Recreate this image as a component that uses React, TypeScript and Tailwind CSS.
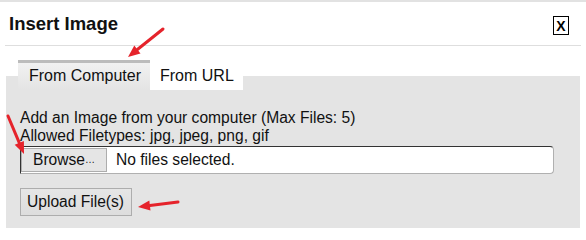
import React from 'react'

const font = { fontFamily: '"Liberation Sans", Arial, sans-serif' }

function Arrows() {
  // red annotation arrows drawn over the dialog
  return (
    <svg className="absolute inset-0 pointer-events-none" width="586" height="228" viewBox="0 0 586 228">
      <g stroke="#e5232b" strokeWidth="3" strokeLinecap="round" fill="#e5232b">
        <line x1="163" y1="27" x2="137.4" y2="47.5" />
        <polygon points="128,55 140.5,51.4 134.3,43.6" stroke="none" />
        <line x1="8" y1="114" x2="19.3" y2="140.9" />
        <polygon points="24,152 23.9,139 14.7,142.8" stroke="none" />
        <line x1="178" y1="200" x2="149.9" y2="203.5" />
        <polygon points="138,205 150.5,208.5 149.3,198.5" stroke="none" />
      </g>
    </svg>
  )
}

export default function App() {
  return (
    <div className="relative w-[586px] h-[228px] overflow-hidden bg-white border-t-2 border-[#e2e2e2] flex flex-col" style={font}>
      {/* Header */}
      <div className="mx-[5px] h-[44px] shrink-0 border-b border-[#dedede] flex items-start justify-between">
        <h1 className="mt-[10.5px] ml-[4px] text-[18.5px] leading-[22px] font-bold text-[#111]">Insert Image</h1>
        <button className="mt-[14px] mr-[12px] w-[16px] h-[19px] border border-black flex items-center justify-center text-[14px] font-bold leading-none text-black">
          X
        </button>
      </div>

      {/* Tabs */}
      <div className="relative z-10 flex items-start mt-[14px] ml-[18px] h-[30px] shrink-0">
        <div className="w-[132px] h-[30px] border-t-[3px] border-[#bcbcbc] bg-gradient-to-b from-[#f1f1f1] to-[#e4e4e4] pl-[11px] pt-[3.5px] text-[16px] leading-[18px] text-[#111]">
          From Computer
        </div>
        <div className="mt-[3px] w-[93px] h-[27px] bg-white pl-[10px] pt-[3.5px] text-[16px] leading-[18px] text-[#111]">
          From URL
        </div>
      </div>

      {/* Panel */}
      <div className="flex-1 -mt-[14px] mx-[6px] bg-[#e4e4e4] pl-[14px] pr-[26px] pt-[33px] text-[15.6px] leading-[18px] text-[#111]">
        <p>Add an Image from your computer (Max Files: 5)</p>
        <p>Allowed Filetypes: jpg, jpeg, png, gif</p>

        <div className="mt-[1px] h-[28px] flex items-center bg-white border border-t-[#333] border-l-[#333] border-r-[#b0b0b0] border-b-[#b0b0b0] rounded-r-[4px]">
          <span className="w-[86px] h-[24px] flex items-center justify-center bg-[#e5e5e5] border border-[#adadad]">
            Browse<span className="text-[10px]">…</span>
          </span>
          <span className="ml-[9px]">No files selected.</span>
        </div>

        <button className="mt-[14px] w-[112px] h-[28px] flex items-center pl-[6px] bg-gradient-to-b from-[#e6e6e6] to-[#dddddd] border border-[#adadad] text-[15.6px] text-[#111]">
          Upload File(s)
        </button>
      </div>

      <Arrows />
    </div>
  )
}
